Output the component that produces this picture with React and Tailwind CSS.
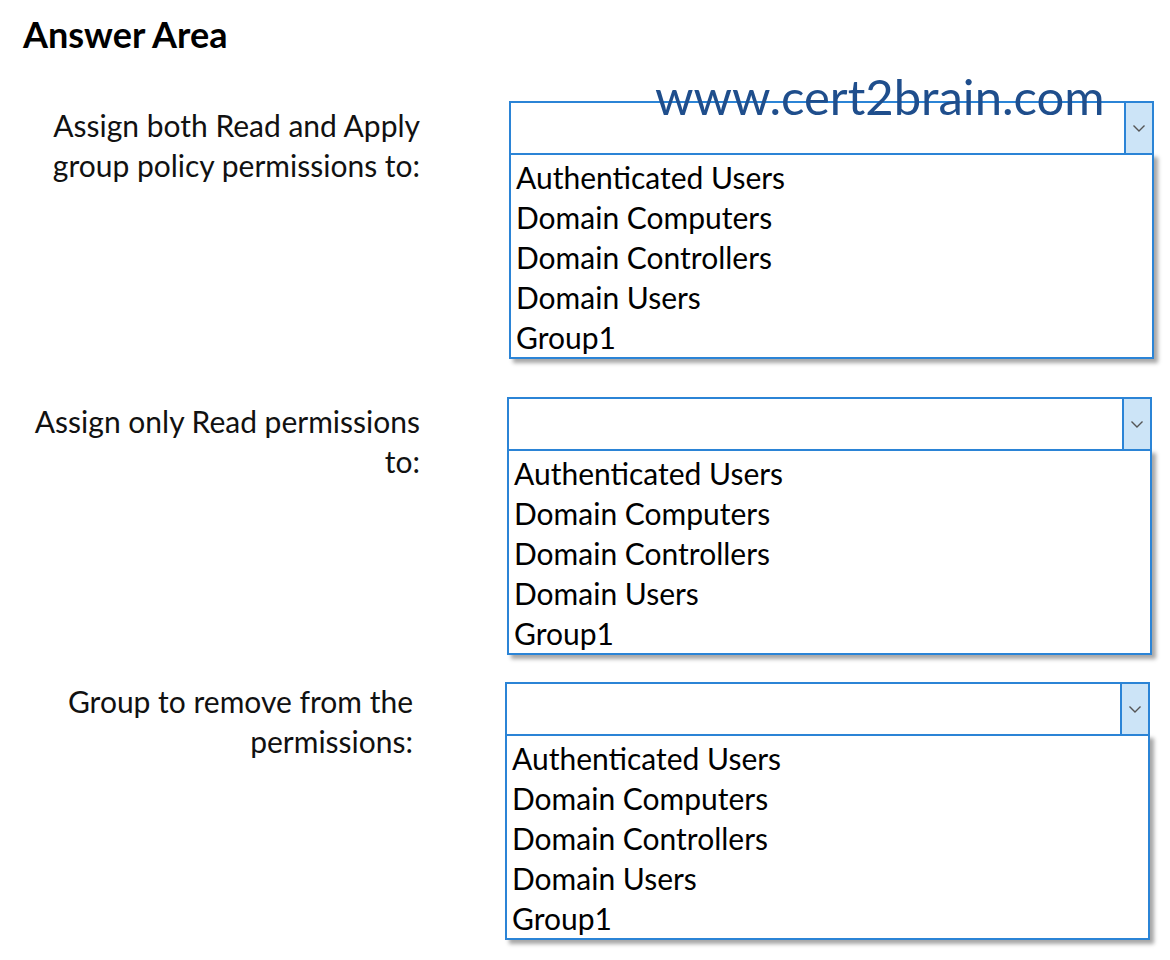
const options = ["Authenticated Users", "Domain Computers", "Domain Controllers", "Domain Users", "Group1"];

const Chevron = () => (
    <svg width="14" height="9" viewBox="0 0 14 9" fill="none">
        <path d="M1.5 1.5 L7 7 L12.5 1.5" stroke="#555" strokeWidth="1.4" />
    </svg>
);

const Dropdown = ({ className }) => (
    <div className={`w-[645px] ${className}`}>
        <div className="flex h-[54px] border-2 border-[#2b84d6] bg-white">
            <div className="flex-1" />
            <div className="flex w-[28px] items-center justify-center border-l-2 border-[#2b84d6] bg-[#cce4f7]">
                <Chevron />
            </div>
        </div>
        <div className="-mt-[2px] flex flex-col border-2 border-[#2b84d6] bg-white pl-[5px] pt-[2px] shadow-[4px_4px_4px_rgba(0,0,0,0.35)]">
            {options.map((o) => (
                <div key={o} className="h-[40px] text-[30px] leading-[40px] text-black">{o}</div>
            ))}
        </div>
    </div>
);

const Label = ({ lines, className }) => (
    <div className={`text-right text-[30px] leading-[40px] text-[#111] ${className}`}>
        {lines.map((l) => (
            <div key={l}>{l}</div>
        ))}
    </div>
);

export default function App() {
    return (
        <div className="relative h-[960px] w-[1170px] bg-white" style={{ fontFamily: "Lato, 'Noto Sans', sans-serif" }}>
            <h1 className="pl-[23px] pt-[14px] text-[36px] font-bold leading-[40px] text-black">Answer Area</h1>
            <div className="mt-[47px] flex">
                <Label lines={["Assign both Read and Apply", "group policy permissions to:"]} className="mt-[4px] w-[420px]" />
                <Dropdown className="ml-[89px]" />
            </div>
            <div className="mt-[38px] flex">
                <Label lines={["Assign only Read permissions", "to:"]} className="mt-[4px] w-[420px]" />
                <Dropdown className="ml-[87px]" />
            </div>
            <div className="mt-[27px] flex">
                <Label lines={["Group to remove from the", "permissions:"]} className="-mt-[1px] w-[413px]" />
                <Dropdown className="ml-[92px]" />
            </div>
            <div className="absolute left-[655px] top-[70px] text-[49px] leading-[52px] text-[#1f4e8c]">www.cert2brain.com</div>
        </div>
    );
}
